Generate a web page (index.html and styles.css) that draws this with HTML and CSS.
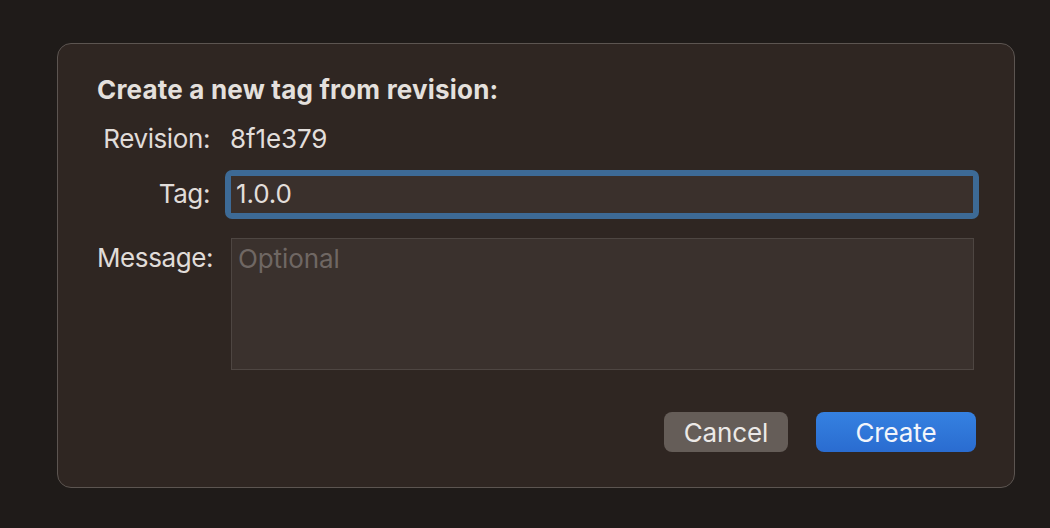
FILE: index.html
```html
<!DOCTYPE html>
<html lang="en">
<head>
<meta charset="utf-8">
<title>Create Tag</title>
<link rel="stylesheet" href="styles.css">
</head>
<body>
<div class="dialog">
  <h1 class="title">Create a new tag from revision:</h1>
  <div class="form">
    <div class="label rev-label">Revision:</div>
    <div class="value">8f1e379</div>
    <div class="label tag-label">Tag:</div>
    <div class="field-ring"><div class="field">1.0.0</div></div>
    <div class="label msg-label">Message:</div>
    <div class="textarea"><span class="placeholder">Optional</span></div>
  </div>
  <div class="buttons">
    <button class="btn cancel">Cancel</button>
    <button class="btn create">Create</button>
  </div>
</div>
</body>
</html>
```

FILE: styles.css
```css
html, body {
  margin: 0;
  padding: 0;
  background: #1f1b19;
  width: 1050px;
  height: 528px;
  overflow: hidden;
}
body {
  padding: 43px 0 0 57px;
  box-sizing: border-box;
  font-family: Inter, "Noto Sans", sans-serif;
  color: #e2dedb;
}
.dialog {
  width: 958px;
  height: 445px;
  box-sizing: border-box;
  background: #2f2622;
  border: 1px solid #5c5551;
  border-radius: 14px;
  padding: 28px 40px 0 39px;
  display: flex;
  flex-direction: column;
}
.title {
  margin: 0;
  font-size: 26px;
  font-weight: 700;
  line-height: 36px;
  letter-spacing: 0.2px;
  color: #e4e0dd;
}
.form {
  display: grid;
  grid-template-columns: 113px 743px;
  column-gap: 21px;
  margin-top: 16px;
  font-size: 26px;
  letter-spacing: -0.1px;
}
.label {
  text-align: right;
  color: #e0dcd9;
  letter-spacing: -0.4px;
  white-space: nowrap;
}
.rev-label {
  line-height: 30px;
}
.value {
  line-height: 30px;
  margin-left: -1px;
}
.tag-label {
  margin-top: 22px;
  line-height: 35px;
}
.field-ring {
  margin: 16px 0 0 -6px;
  width: 754px;
  box-sizing: border-box;
  padding: 6px;
  background: #3d6a96;
  border-radius: 7px;
}
.field {
  height: 37px;
  background: #3a302c;
  line-height: 35px;
  padding-left: 5px;
}
.msg-label {
  margin-top: 19px;
  line-height: 39px;
}
.textarea {
  margin-top: 19px;
  height: 132px;
  box-sizing: border-box;
  background: #3a312d;
  border: 1px solid #4e4642;
  padding: 0 0 0 6px;
  line-height: 39px;
}
.placeholder { color: #6f6763; }
.buttons {
  display: flex;
  justify-content: flex-end;
  gap: 28px;
  margin: 42px -2px 0 0;
}
.btn {
  font-family: Inter, "Noto Sans", sans-serif;
  font-size: 26px;
  letter-spacing: -0.1px;
  height: 40px;
  border: none;
  border-radius: 8px;
  color: #ece9e7;
  padding: 0;
}
.cancel {
  width: 124px;
  background: #655d58;
}
.create {
  width: 160px;
  background: linear-gradient(#3581e1, #2a6cd0);
  color: #f2f5fb;
}
```
